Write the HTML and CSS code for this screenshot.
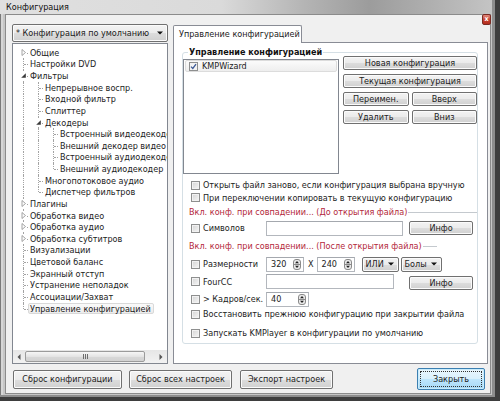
FILE: index.html
```html
<!DOCTYPE html>
<html lang="ru">
<head>
<meta charset="utf-8">
<title>Конфигурация</title>
<link rel="stylesheet" href="styles.css">
</head>
<body>
<div class="window">
  <div class="titlebar"><span class="title">Конфигурация</span></div>
  <div class="close-btn">x</div>
  <div class="client">
    <div class="main">
      <div class="left">
        <div class="combo"><span>* Конфигурация по умолчанию</span><svg class="combo-arrow" width="6" height="4" viewBox="0 0 6 4"><path d="M0 0.5 L6 0.5 L3 3.5 Z" fill="#111"/></svg></div>
        <div class="tree">
          <div class="tree-items">
            <div class="node"><span class="conn first"><svg class="expander" width="7" height="9" viewBox="0 0 7 9"><rect width="7" height="9" fill="#fff"/><path d="M2 1.5 L5.5 4.5 L2 7.5 Z" fill="#fff" stroke="#9a9a9a" stroke-width="0.9"/></svg></span><span class="label">Общие</span></div>
            <div class="node"><span class="conn"></span><span class="label">Настройки DVD</span></div>
            <div class="node"><span class="conn"><svg class="expander" width="7" height="9" viewBox="0 0 7 9"><rect width="7" height="9" fill="#fff"/><path d="M5.8 2.2 L5.8 6.8 L1.2 6.8 Z" fill="#3a3a3a"/></svg></span><span class="label">Фильтры</span></div>
            <div class="node"><span class="guide"></span><span class="conn"></span><span class="label">Непрерывное воспр.</span></div>
            <div class="node"><span class="guide"></span><span class="conn"></span><span class="label">Входной фильтр</span></div>
            <div class="node"><span class="guide"></span><span class="conn"></span><span class="label">Сплиттер</span></div>
            <div class="node"><span class="guide"></span><span class="conn"><svg class="expander" width="7" height="9" viewBox="0 0 7 9"><rect width="7" height="9" fill="#fff"/><path d="M5.8 2.2 L5.8 6.8 L1.2 6.8 Z" fill="#3a3a3a"/></svg></span><span class="label">Декодеры</span></div>
            <div class="node"><span class="guide"></span><span class="guide"></span><span class="conn"></span><span class="label">Встроенный видеодекодер</span></div>
            <div class="node"><span class="guide"></span><span class="guide"></span><span class="conn"></span><span class="label">Внешний декодер видео</span></div>
            <div class="node"><span class="guide"></span><span class="guide"></span><span class="conn"></span><span class="label">Встроенный аудиодекодер</span></div>
            <div class="node"><span class="guide"></span><span class="guide"></span><span class="conn last"></span><span class="label">Внешний аудиодекодер</span></div>
            <div class="node"><span class="guide"></span><span class="conn"></span><span class="label">Многопотоковое аудио</span></div>
            <div class="node"><span class="guide"></span><span class="conn last"></span><span class="label">Диспетчер фильтров</span></div>
            <div class="node"><span class="conn"><svg class="expander" width="7" height="9" viewBox="0 0 7 9"><rect width="7" height="9" fill="#fff"/><path d="M2 1.5 L5.5 4.5 L2 7.5 Z" fill="#fff" stroke="#9a9a9a" stroke-width="0.9"/></svg></span><span class="label">Плагины</span></div>
            <div class="node"><span class="conn"><svg class="expander" width="7" height="9" viewBox="0 0 7 9"><rect width="7" height="9" fill="#fff"/><path d="M2 1.5 L5.5 4.5 L2 7.5 Z" fill="#fff" stroke="#9a9a9a" stroke-width="0.9"/></svg></span><span class="label">Обработка видео</span></div>
            <div class="node"><span class="conn"><svg class="expander" width="7" height="9" viewBox="0 0 7 9"><rect width="7" height="9" fill="#fff"/><path d="M2 1.5 L5.5 4.5 L2 7.5 Z" fill="#fff" stroke="#9a9a9a" stroke-width="0.9"/></svg></span><span class="label">Обработка аудио</span></div>
            <div class="node"><span class="conn"><svg class="expander" width="7" height="9" viewBox="0 0 7 9"><rect width="7" height="9" fill="#fff"/><path d="M2 1.5 L5.5 4.5 L2 7.5 Z" fill="#fff" stroke="#9a9a9a" stroke-width="0.9"/></svg></span><span class="label">Обработка субтитров</span></div>
            <div class="node"><span class="conn"></span><span class="label">Визуализации</span></div>
            <div class="node"><span class="conn"></span><span class="label">Цветовой баланс</span></div>
            <div class="node"><span class="conn"></span><span class="label">Экранный отступ</span></div>
            <div class="node"><span class="conn"></span><span class="label">Устранение неполадок</span></div>
            <div class="node"><span class="conn"></span><span class="label">Ассоциации/Захват</span></div>
            <div class="node"><span class="conn last"></span><span class="label selected">Управление конфигурацией</span></div>
          </div>
          <div class="hscroll">
            <span class="sarrow"><svg width="4" height="6" viewBox="0 0 4 6"><path d="M3.5 0 L3.5 6 L0.5 3 Z" fill="#555"/></svg></span>
            <div class="track"><div class="thumb"><span class="grip"></span><span class="grip"></span><span class="grip"></span></div></div>
            <span class="sarrow"><svg width="4" height="6" viewBox="0 0 4 6"><path d="M0.5 0 L0.5 6 L3.5 3 Z" fill="#555"/></svg></span>
          </div>
        </div>
      </div>
      <div class="tabs">
        <div class="tabstrip"><div class="tab">Управление конфигурацией</div></div>
        <div class="panel">
          <fieldset class="group">
            <legend>Управление конфигурацией</legend>
            <div class="top">
              <div class="list">
                <div class="item"><span class="cb checked"><svg width="7" height="7" viewBox="0 0 7 7"><path d="M1 3.6 L2.8 5.4 L6 1.2" fill="none" stroke="#3d5a96" stroke-width="1.3"/></svg></span><span>KMPWizard</span></div>
              </div>
              <div class="btncol">
                <div class="btn">Новая конфигурация</div>
                <div class="btn">Текущая конфигурация</div>
                <div class="pair"><div class="btn">Переимен.</div><div class="btn">Вверх</div></div>
                <div class="pair"><div class="btn">Удалить</div><div class="btn">Вниз</div></div>
              </div>
            </div>
            <div class="row r1"><span class="cb"></span><span class="text">Открыть файл заново, если конфигурация выбрана вручную</span></div>
            <div class="row r2"><span class="cb"></span><span class="text">При переключении копировать в текущую конфигурацию</span></div>
            <div class="hdr h1"><span class="hdr-text">Вкл. конф. при совпадении... (До открытия файла)</span><span class="hdr-line"></span></div>
            <div class="row r3"><span class="cb"></span><span class="text flabel">Символов</span><span class="input w-sym"></span><div class="btn info">Инфо</div></div>
            <div class="hdr h2"><span class="hdr-text">Вкл. конф. при совпадении... (После открытия файла)</span><span class="hdr-line"></span></div>
            <div class="row r4"><span class="cb"></span><span class="text flabel">Размерности</span>
              <span class="input spin w-spin"><span class="val">320</span><svg class="spinbtn" width="8" height="11" viewBox="0 0 8 11"><rect x="0.5" y="0.5" width="7" height="10" rx="2.5" fill="#e9e9e9" stroke="#8a8a8a"/><path d="M1 5.5 L7 5.5" stroke="#8a8a8a"/><path d="M2 4.3 L6 4.3 L4 2 Z M2 6.7 L6 6.7 L4 9 Z" fill="#222"/></svg></span>
              <span class="x-sep">X</span>
              <span class="input spin w-spin"><span class="val">240</span><svg class="spinbtn" width="8" height="11" viewBox="0 0 8 11"><rect x="0.5" y="0.5" width="7" height="10" rx="2.5" fill="#e9e9e9" stroke="#8a8a8a"/><path d="M1 5.5 L7 5.5" stroke="#8a8a8a"/><path d="M2 4.3 L6 4.3 L4 2 Z M2 6.7 L6 6.7 L4 9 Z" fill="#222"/></svg></span>
              <div class="btn dd dd-or"><span>ИЛИ</span><svg width="6" height="4" viewBox="0 0 6 4"><path d="M0 0.5 L6 0.5 L3 3.5 Z" fill="#111"/></svg></div>
              <div class="btn dd dd-more"><span>Болы</span><svg width="6" height="4" viewBox="0 0 6 4"><path d="M0 0.5 L6 0.5 L3 3.5 Z" fill="#111"/></svg></div>
            </div>
            <div class="row r5"><span class="cb"></span><span class="text flabel">FourCC</span><span class="input w-four"></span><div class="btn info info2">Инфо</div></div>
            <div class="row r6"><span class="cb"></span><span class="text flabel">&gt; Кадров/сек.</span>
              <span class="input spin w-fps"><span class="val">40</span><svg class="spinbtn" width="8" height="11" viewBox="0 0 8 11"><rect x="0.5" y="0.5" width="7" height="10" rx="2.5" fill="#e9e9e9" stroke="#8a8a8a"/><path d="M1 5.5 L7 5.5" stroke="#8a8a8a"/><path d="M2 4.3 L6 4.3 L4 2 Z M2 6.7 L6 6.7 L4 9 Z" fill="#222"/></svg></span>
            </div>
            <div class="row r7"><span class="cb"></span><span class="text">Восстановить прежнюю конфигурацию при закрытии файла</span></div>
            <div class="row r8"><span class="cb"></span><span class="text">Запускать KMPlayer в конфигурации по умолчанию</span></div>
          </fieldset>
        </div>
      </div>
    </div>
    <div class="bottom">
      <div class="btn b1">Сброс конфигурации</div>
      <div class="btn b2">Сброс всех настроек</div>
      <div class="btn b3">Экспорт настроек</div>
      <div class="btn b4 default"><span class="focus">Закрыть</span></div>
    </div>
  </div>
</div>
</body>
</html>
```

FILE: styles.css
```css
* { box-sizing: border-box; }
html, body { margin: 0; padding: 0; }
body {
  width: 500px;
  height: 401px;
  overflow: hidden;
  font-family: "DejaVu Sans Condensed", "DejaVu Sans", sans-serif;
  font-stretch: condensed;
  font-size: 9px;
  color: #1c1c1c;
  background: #3c3c3c;
}
.window {
  position: relative;
  width: 500px;
  height: 401px;
  display: flex;
  flex-direction: column;
  background: #c6c6c6;
  box-shadow: inset -5px -4px 0 #3e3e3e, inset -8px -6px 0 #8d8d8d, inset 1px 0 0 #7a7a7a, inset 3px 0 0 #d6d6d6;
}
.titlebar {
  height: 14px;
  margin-right: 8px;
  padding-left: 6px;
  line-height: 15px;
  background: linear-gradient(to right, #e0e0e0 0%, #dadada 45%, #b4b4b4 62%, #9c9c9c 75%, #b0b0b0 88%, #c4c4c4 100%);
}
.title { color: #111; }
.close-btn {
  position: absolute;
  top: 14px;
  right: 9px;
  width: 9px;
  height: 11px;
  border: 1px solid #7a2a22;
  border-radius: 2px;
  background: linear-gradient(#e28a7e, #c7402f 55%, #b32d1e);
  color: #fff;
  font-size: 7px;
  font-weight: bold;
  line-height: 8px;
  text-align: center;
}
.client {
  margin-left: 5px;
  width: 486px;
  height: 380px;
  border: 1px solid #8b8b8b;
  background: #f0f0f0;
  padding: 9px 2px 0 6px;
}
.main {
  display: flex;
  gap: 5px;
  height: 340px;
}
.left {
  width: 156px;
  display: flex;
  flex-direction: column;
}
.combo {
  height: 18px;
  border: 1px solid #707070;
  border-radius: 2px;
  background: linear-gradient(#f3f3f3 0%, #ebebeb 50%, #dddddd 51%, #d0d0d0 100%);
  box-shadow: inset 0 0 0 1px #fbfbfb;
  display: flex;
  align-items: center;
  justify-content: space-between;
  padding: 0 4px 0 3px;
  white-space: nowrap;
}
.combo-arrow { flex: none; }
.tree {
  margin-top: 1px;
  flex: 1;
  border: 1px solid #828790;
  background: #fff;
  display: flex;
  flex-direction: column;
  overflow: hidden;
}
.tree-items {
  flex: 1;
  padding: 3px 0 0 4px;
  overflow: hidden;
}
.node {
  display: flex;
  height: 11.64px;
  align-items: stretch;
  white-space: nowrap;
}
.guide, .conn {
  position: relative;
  flex: none;
  width: 15px;
}
.conn { width: 11px; }
.guide::before, .conn::before {
  content: "";
  position: absolute;
  left: 6px;
  top: 0;
  bottom: 0;
  border-left: 1px dotted #a3a3a3;
}
.conn.first::before { top: 50%; }
.conn.last::before { bottom: 50%; }
.conn::after {
  content: "";
  position: absolute;
  left: 7px;
  width: 4px;
  top: 50%;
  border-top: 1px dotted #a3a3a3;
}
.expander {
  position: absolute;
  left: 3px;
  top: 1px;
  z-index: 1;
}
.label {
  display: flex;
  align-items: center;
  padding: 0 2px 0 1px;
  border: 1px solid transparent;
  border-radius: 2px;
  line-height: 10px;
}
.label.selected {
  border-color: #d9d9d9;
  background: linear-gradient(#fafafa, #ececec);
}
.hscroll {
  height: 13px;
  display: flex;
  align-items: center;
  background: linear-gradient(to bottom, #e6e6e6, #f2f2f2);
}
.sarrow {
  width: 12px;
  flex: none;
  display: flex;
  justify-content: center;
  align-items: center;
}
.track { flex: 1; display: flex; }
.thumb {
  width: 120px;
  height: 11px;
  border: 1px solid #9b9b9b;
  border-radius: 2px;
  background: linear-gradient(#f6f6f6, #e4e4e4 50%, #d8d8d8 51%, #d2d2d2);
  display: flex;
  justify-content: center;
  align-items: center;
  gap: 1px;
}
.grip { width: 1px; height: 5px; background: #6d6d6d; }
.tabs {
  width: 315px;
  display: flex;
  flex-direction: column;
  padding-top: 1px;
}
.tabstrip { display: flex; height: 17px; }
.tab {
  width: 129px;
  height: 18px;
  border: 1px solid #898c95;
  border-bottom: none;
  background: #fff;
  padding-left: 5px;
  line-height: 17px;
  border-radius: 2px 2px 0 0;
  white-space: nowrap;
  position: relative;
  z-index: 1;
}
.panel {
  flex: 1;
  border: 1px solid #898c95;
  background: #fff;
  padding: 4px 9px 0 8px;
}
.group {
  margin: 0;
  padding: 0 0 2px 0;
  border: 1px solid #d5dfe5;
  border-radius: 3px;
  min-width: 0;
}
.group legend {
  margin-left: 5px;
  padding: 0 1px;
  font-weight: bold;
  line-height: 11px;
  color: #111;
}
.top {
  display: flex;
  gap: 4px;
  margin-top: -2px;
}
.list {
  width: 156px;
  height: 115px;
  margin-top: 3px;
  border: 1px solid #828790;
  background: #fff;
  padding: 0 1px;
}
.item {
  height: 12px;
  display: flex;
  align-items: center;
  gap: 4px;
  padding-left: 3px;
  border: 1px solid #dcdcdc;
  border-radius: 2px;
  background: linear-gradient(#fbfbfb, #eeeeee);
}
.btncol {
  width: 134px;
  display: flex;
  flex-direction: column;
  gap: 4px;
}
.pair { display: flex; gap: 3px; }
.pair .btn { flex: 1; }
.btn {
  height: 14px;
  border: 1px solid #707070;
  border-radius: 2px;
  background: linear-gradient(#f3f3f3 0%, #ebebeb 50%, #dddddd 51%, #d0d0d0 100%);
  box-shadow: inset 0 0 0 1px #fbfbfb;
  display: flex;
  align-items: center;
  justify-content: center;
  white-space: nowrap;
  color: #1c1c1c;
}
.cb {
  flex: none;
  width: 9px;
  height: 9px;
  border: 1px solid #8e8f8f;
  background: linear-gradient(135deg, #d4d4d4, #f6f6f6);
  box-shadow: inset 0 0 0 1px #f2f2f2;
  display: flex;
  align-items: center;
  justify-content: center;
}
.cb.checked { background: #f4f4f4; }
.row {
  display: flex;
  align-items: center;
  padding-left: 8px;
  white-space: nowrap;
}
.row .text { margin-left: 3px; }
.row .flabel { width: 63px; }
.r1 { height: 12px; margin-top: 5px; }
.r2 { height: 13px; }
.r3 { height: 16px; }
.r4 { height: 16px; }
.r5 { height: 17px; margin-top: 1px; }
.r6 { height: 16px; margin-top: 1px; }
.r7 { height: 14px; }
.r8 { height: 16px; margin-top: 4px; }
.hdr {
  display: flex;
  align-items: center;
  padding-left: 6px;
  color: #b3283b;
  white-space: nowrap;
}
.h1 { height: 16px; }
.h2 { height: 20px; padding-right: 40px; }
.hdr-line {
  flex: 1;
  height: 1px;
  background: #c4c9ce;
  margin-left: 1px;
}
.input {
  flex: none;
  height: 15px;
  border: 1px solid #b3b7bd;
  border-top-color: #a4a8ae;
  background: #fff;
  display: flex;
  align-items: center;
}
.w-sym { width: 137px; }
.w-four { width: 128px; }
.w-spin { width: 38px; }
.w-fps { width: 43px; }
.spin { justify-content: space-between; padding: 0 2px 0 4px; }
.x-sep { margin: 0 3px 0 4px; }
.info { width: 64px; margin-left: 6px; height: 14px; }
.info2 { margin-left: 15px; margin-top: 2px; }
.dd {
  height: 15px;
  justify-content: space-between;
  padding: 0 4px 0 3px;
}
.dd-or { width: 37px; margin-left: 7px; }
.dd-more { width: 41px; margin-left: 2px; }
.bottom {
  display: flex;
  align-items: center;
  height: 22px;
  margin-top: 4px;
}
.bottom .btn { height: 19px; }
.b1 { width: 109px; margin-left: 1px; }
.b2 { width: 103px; margin-left: 7px; }
.b3 { width: 93px; margin-left: 8px; }
.b4 { width: 68px; margin-left: auto; margin-right: 3px; }
.bottom .default {
  height: 22px;
  border-color: #3c7fb1;
  background: linear-gradient(#eaf6fd 0%, #d9f0fc 50%, #bee6fd 51%, #a7d9f5 100%);
  box-shadow: inset 0 0 0 1px #c8ecfc;
  padding: 2px;
}
.focus {
  flex: 1;
  align-self: stretch;
  border: 1px dotted #333;
  display: flex;
  align-items: center;
  justify-content: center;
}
```
